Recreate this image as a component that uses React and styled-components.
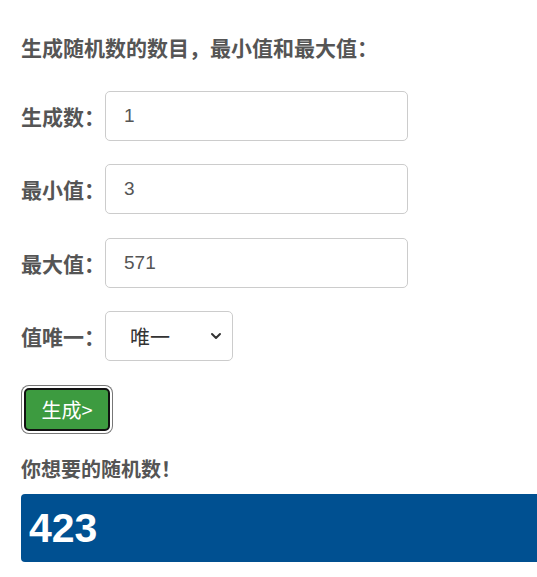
import React, { useState } from "react";
import styled, { createGlobalStyle } from "styled-components";
import { ChevronDown } from "lucide-react";

const GlobalStyle = createGlobalStyle`
  body {
    margin: 0;
    overflow-x: hidden;
    background: #fff;
    font-family: "Liberation Sans", "Noto Sans CJK SC", Arial, sans-serif;
    color: #555;
  }
`;

const Page = styled.div`
  padding: 36px 0 0 21px;
  display: flex;
  flex-direction: column;
`;

const Heading = styled.div`
  font-family: "Noto Sans CJK SC", sans-serif;
  font-weight: 700;
  font-size: ${(props) => props.size || "21px"};
  line-height: 22px;
  color: #555;
  margin-bottom: ${(props) => props.gap || "0px"};
`;

const Form = styled.div`
  display: flex;
  flex-direction: column;
  gap: 24px;
`;

const Row = styled.div`
  display: flex;
  align-items: center;
  height: 49.5px;
`;

const Label = styled.label`
  font-family: "Noto Sans CJK SC", sans-serif;
  font-weight: 700;
  font-size: 21px;
  color: #555;
  width: 84px;
  white-space: nowrap;
`;

const Input = styled.input`
  box-sizing: border-box;
  width: 303px;
  height: 50px;
  border: 1px solid #ccc;
  border-radius: 5px;
  padding: 0 18px;
  font-family: "Liberation Sans", Arial, sans-serif;
  font-size: 19px;
  color: #555;
  outline: none;
`;

const SelectWrap = styled.div`
  position: relative;
  width: 128px;
  height: 50px;
`;

const Select = styled.select`
  box-sizing: border-box;
  appearance: none;
  width: 100%;
  height: 100%;
  border: 1px solid #ccc;
  border-radius: 5px;
  background: #fff;
  padding: 0 24px;
  font-family: "Noto Sans CJK SC", sans-serif;
  font-size: 20px;
  color: #333;
  outline: none;
`;

const Arrow = styled.span`
  position: absolute;
  right: 9px;
  top: 17px;
  display: flex;
  pointer-events: none;
  color: #333;
`;

const Button = styled.button`
  align-self: flex-start;
  box-sizing: border-box;
  margin: 27px 0 0 3px;
  width: 86px;
  height: 43px;
  background: #3d9b40;
  border: 2px solid #111;
  border-radius: 5px;
  box-shadow: 0 0 0 2px #fff, 0 0 0 3px #777;
  color: #fff;
  font-family: "Noto Sans CJK SC", sans-serif;
  font-size: 20px;
  padding: 0;
  cursor: pointer;
`;

const Result = styled.div`
  margin-top: 27px;
  display: flex;
  flex-direction: column;
`;

const NumberBox = styled.div`
  margin-top: 14px;
  width: 560px;
  height: 68px;
  box-sizing: border-box;
  background: #005091;
  border-radius: 4px;
  padding-left: 8px;
  display: flex;
  align-items: center;
  color: #fff;
  font-family: "Liberation Sans", Arial, sans-serif;
  font-weight: 700;
  font-size: 41px;
`;

export default function App() {
  const [count, setCount] = useState("1");
  const [min, setMin] = useState("3");
  const [max, setMax] = useState("571");
  const [unique, setUnique] = useState("unique");

  return (
    <>
      <GlobalStyle />
      <Page>
        <Heading gap="33px">生成随机数的数目，最小值和最大值：</Heading>
        <Form>
          <Row>
            <Label>生成数：</Label>
            <Input value={count} onChange={(e) => setCount(e.target.value)} />
          </Row>
          <Row>
            <Label>最小值：</Label>
            <Input value={min} onChange={(e) => setMin(e.target.value)} />
          </Row>
          <Row>
            <Label>最大值：</Label>
            <Input value={max} onChange={(e) => setMax(e.target.value)} />
          </Row>
          <Row>
            <Label>值唯一：</Label>
            <SelectWrap>
              <Select value={unique} onChange={(e) => setUnique(e.target.value)}>
                <option value="unique">唯一</option>
                <option value="repeat">可重复</option>
              </Select>
              <Arrow>
                <ChevronDown size={16} strokeWidth={3} />
              </Arrow>
            </SelectWrap>
          </Row>
        </Form>
        <Button>生成&gt;</Button>
        <Result>
          <Heading size="20px">你想要的随机数！</Heading>
          <NumberBox>423</NumberBox>
        </Result>
      </Page>
    </>
  );
}
